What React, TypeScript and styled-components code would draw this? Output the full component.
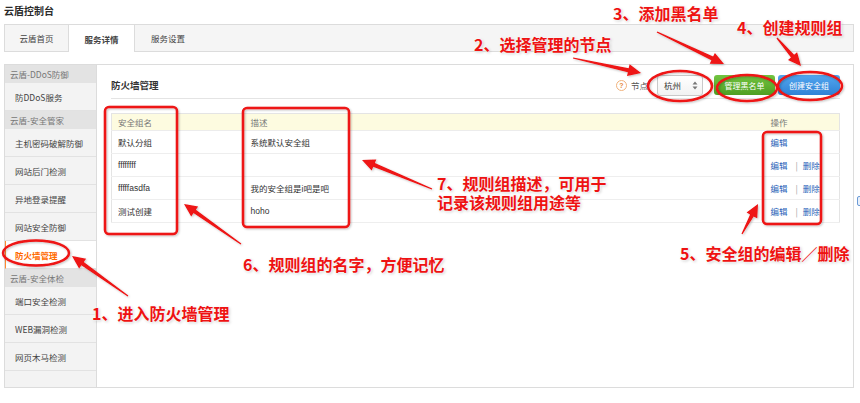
import React from "react";
import styled, { createGlobalStyle } from "styled-components";

const CJK = `"Noto Sans CJK SC", "Noto Sans", sans-serif`;
const LATIN = `"Liberation Sans", "Noto Sans CJK SC", sans-serif`;
const RED = "#ee1212";

const GlobalStyle = createGlobalStyle`
  html, body {
    margin: 0;
    padding: 0;
    background: #ffffff;
  }
  * {
    box-sizing: border-box;
  }
`;

const Page = styled.div`
  position: relative;
  width: 860px;
  height: 403px;
  overflow: hidden;
  background: #ffffff;
  font-family: ${CJK};
  color: #333;
`;

const Shell = styled.div`
  padding: 0 6px 0 4px;
`;

const AppTitle = styled.div`
  height: 24px;
  line-height: 21px;
  font-size: 10px;
  font-weight: bold;
  color: #2b2b2b;
`;

const TabBar = styled.div`
  display: flex;
  height: 28px;
  border: 1px solid #dcdcdc;
  background: #f5f5f5;
`;

const Tab = styled.div<{ width: number; active?: boolean; last?: boolean }>`
  width: ${p => p.width}px;
  display: flex;
  align-items: center;
  justify-content: center;
  font-size: 8.5px;
  color: #444;
  font-weight: ${p => (p.active ? "bold" : "normal")};
  background: ${p => (p.active ? "#ffffff" : "transparent")};
  border-right: ${p => (p.last ? "none" : "1px solid #dcdcdc")};
  margin-bottom: ${p => (p.active ? "-1px" : "0")};
  position: relative;
`;

const Panel = styled.div`
  margin-top: 12px;
  display: flex;
  height: 324px;
  border: 1px solid #dcdcdc;
`;

const Sidebar = styled.div`
  width: 92px;
  display: flex;
  flex-direction: column;
  overflow: hidden;
  background: #f3f3f3;
  border-right: 1px solid #dcdcdc;
`;

const SideHeader = styled.div`
  flex-shrink: 0;
  height: 18px;
  display: flex;
  align-items: center;
  padding-left: 5px;
  background: #e3e3e3;
  font-size: 8.5px;
  color: #777;
`;

const SideItem = styled.div<{ active?: boolean }>`
  flex-shrink: 0;
  height: 28px;
  display: flex;
  align-items: center;
  padding-left: ${p => (p.active ? "9px" : "10px")};
  font-size: 8.5px;
  color: ${p => (p.active ? "#ff6a00" : "#444")};
  font-weight: ${p => (p.active ? "bold" : "normal")};
  background: ${p => (p.active ? "#ffffff" : "transparent")};
  border-bottom: 1px solid #e2e2e2;
  border-left: ${p => (p.active ? "1px solid #ff8a30" : "none")};
  margin-right: ${p => (p.active ? "-1px" : "0")};
`;

const Content = styled.div`
  flex: 1;
  padding: 9px 13px 0 14px;
`;

const TitleRow = styled.div`
  height: 25px;
  display: flex;
  align-items: flex-start;
  justify-content: space-between;
  border-bottom: 1px solid #e4e4e4;
`;

const SectionTitle = styled.div`
  font-size: 9.5px;
  font-weight: bold;
  color: #333;
  line-height: 22px;
`;

const Controls = styled.div`
  display: flex;
  align-items: center;
  height: 22px;
`;

const HelpIcon = styled.span`
  width: 11px;
  height: 11px;
  border-radius: 50%;
  border: 1px solid #f1b27c;
  color: #e7873a;
  font-family: ${LATIN};
  font-size: 7px;
  font-weight: bold;
  display: flex;
  align-items: center;
  justify-content: center;
`;

const NodeLabel = styled.span`
  margin: 0 9px 0 4px;
  font-size: 8.5px;
  color: #555;
`;

const Select = styled.div`
  width: 46px;
  height: 21px;
  display: flex;
  align-items: center;
  justify-content: space-between;
  padding: 0 4px 0 6px;
  border: 1px solid #c9c9c9;
  border-radius: 3px;
  background: linear-gradient(#ffffff, #f2f2f2);
  font-size: 8.5px;
  color: #333;
`;

const Button = styled.div<{ tone: "green" | "blue"; width: number }>`
  width: ${p => p.width}px;
  height: 20px;
  display: flex;
  align-items: center;
  justify-content: center;
  border-radius: 3px;
  font-size: 8px;
  color: #ffffff;
  background: ${p =>
    p.tone === "green"
      ? "linear-gradient(#72c441, #4f9f22)"
      : "linear-gradient(#52a6ef, #2f82d6)"};
  margin-left: ${p => (p.tone === "green" ? "11px" : "3px")};
`;

const Table = styled.table`
  margin-top: 14px;
  width: 100%;
  border-collapse: collapse;
  border: 1px solid #e4e4e4;
  font-size: 8.5px;
`;

const HeadCell = styled.th<{ width?: number }>`
  ${p => (p.width ? `width: ${p.width}px;` : "")}
  height: 17px;
  padding: 0 0 0 6px;
  text-align: left;
  font-weight: normal;
  color: #777;
  background: #fdfbe0;
  border-bottom: 1px solid #ececec;
`;

const Cell = styled.td<{ latin?: boolean }>`
  height: 23px;
  padding: 0 0 0 6px;
  color: #333;
  font-family: ${p => (p.latin ? LATIN : CJK)};
  border-bottom: 1px solid #eeeeee;
`;

const OpLink = styled.span`
  color: #2a5fb8;
`;

const OpSep = styled.span`
  color: #999;
  margin: 0 5px 0 8px;
`;

const EdgeTab = styled.div`
  position: absolute;
  right: -4px;
  top: 196px;
  width: 7px;
  height: 10px;
  border: 1px solid #6c9bd6;
  border-radius: 2px;
  background: #e8f0fb;
`;

const Overlay = styled.svg`
  position: absolute;
  left: 0;
  top: 0;
  pointer-events: none;
`;

const Note = styled.div<{ x: number; y: number }>`
  position: absolute;
  left: ${p => p.x}px;
  top: ${p => p.y}px;
  font-family: ${CJK};
  font-size: 16px;
  font-weight: bold;
  line-height: 19px;
  color: ${RED};
  white-space: nowrap;
  text-shadow: 0 0 2px #fff, 0 0 3px #fff, 1px 1px 3px rgba(0, 0, 0, 0.25);
`;

const SIDEBAR = [
  { header: "云盾-DDoS防御", items: ["防DDoS服务"] },
  {
    header: "云盾-安全管家",
    items: ["主机密码破解防御", "网站后门检测", "异地登录提醒", "网站安全防御", "防火墙管理"]
  },
  { header: "云盾-安全体检", items: ["端口安全检测", "WEB漏洞检测", "网页木马检测", ""] }
];

const GROUPS = [
  { name: "默认分组", desc: "系统默认安全组", remove: false },
  { name: "ffffffff", desc: "", remove: true },
  { name: "fffffasdfa", desc: "我的安全组是i吧是吧", remove: true },
  { name: "测试创建", desc: "hoho", remove: true }
];

// tail -> head, tapered shaft with a triangular head
const arrowPoints = (x1: number, y1: number, x2: number, y2: number) => {
  const len = Math.hypot(x2 - x1, y2 - y1);
  const dx = (x2 - x1) / len;
  const dy = (y2 - y1) / len;
  const nx = -dy;
  const ny = dx;
  const headLen = 13;
  const cx = x2 - dx * headLen;
  const cy = y2 - dy * headLen;
  const pts = [
    [x1 + nx * 0.6, y1 + ny * 0.6],
    [cx + nx * 2, cy + ny * 2],
    [cx + nx * 6, cy + ny * 6],
    [x2, y2],
    [cx - nx * 6, cy - ny * 6],
    [cx - nx * 2, cy - ny * 2],
    [x1 - nx * 0.6, y1 - ny * 0.6]
  ];
  return pts.map(p => `${p[0].toFixed(1)},${p[1].toFixed(1)}`).join(" ");
};

const ARROWS = [
  [128, 296, 72, 256],
  [573, 58, 641, 73],
  [657, 32, 724, 64],
  [777, 38, 801, 66],
  [742, 234, 758, 204],
  [241, 244, 184, 204],
  [432, 189, 362, 160]
];

const StepperIcon = () => (
  <svg width="6" height="9" viewBox="0 0 6 9">
    <path d="M3 0.5 L5.5 3.5 H0.5 Z M3 8.5 L5.5 5.5 H0.5 Z" fill="#777" />
  </svg>
);

const Annotations = () => (
  <>
    <Overlay width="860" height="403" viewBox="0 0 860 403">
      <defs>
        <filter id="soft" x="-20%" y="-20%" width="140%" height="140%">
          <feDropShadow dx="1" dy="1" stdDeviation="1" floodColor="#000" floodOpacity="0.25" />
        </filter>
      </defs>
      <g fill="none" stroke={RED} strokeWidth="2.5" filter="url(#soft)">
        <ellipse cx="36" cy="253" rx="33" ry="12.5" />
        <rect x="105" y="107" width="72" height="127" rx="4" />
        <rect x="243" y="108" width="106" height="119" rx="4" />
        <rect x="763" y="132" width="58" height="92" rx="4" />
        <ellipse cx="680" cy="86" rx="32" ry="15" />
        <ellipse cx="747" cy="88" rx="30" ry="13" />
        <ellipse cx="810" cy="86" rx="32" ry="14" />
      </g>
      <g fill={RED} filter="url(#soft)">
        {ARROWS.map((a, i) => (
          <polygon key={i} points={arrowPoints(a[0], a[1], a[2], a[3])} />
        ))}
      </g>
    </Overlay>
    <Note x={92} y={304}>1、进入防火墙管理</Note>
    <Note x={474} y={35}>2、选择管理的节点</Note>
    <Note x={613} y={4}>3、添加黑名单</Note>
    <Note x={737} y={18}>4、创建规则组</Note>
    <Note x={680} y={244}>5、安全组的编辑／删除</Note>
    <Note x={243} y={255}>6、规则组的名字，方便记忆</Note>
    <Note x={437} y={174}>
      7、规则组描述，可用于
      <br />
      记录该规则组用途等
    </Note>
  </>
);

const App = () => (
  <Page>
    <GlobalStyle />
    <Shell>
      <AppTitle>云盾控制台</AppTitle>
      <TabBar>
        <Tab width={64}>云盾首页</Tab>
        <Tab width={66} active>
          服务详情
        </Tab>
        <Tab width={66} last>
          服务设置
        </Tab>
      </TabBar>
      <Panel>
        <Sidebar>
          {SIDEBAR.map(group => (
            <React.Fragment key={group.header}>
              <SideHeader>{group.header}</SideHeader>
              {group.items.map((item, i) => (
                <SideItem key={group.header + i} active={item === "防火墙管理"}>
                  {item}
                </SideItem>
              ))}
            </React.Fragment>
          ))}
        </Sidebar>
        <Content>
          <TitleRow>
            <SectionTitle>防火墙管理</SectionTitle>
            <Controls>
              <HelpIcon>?</HelpIcon>
              <NodeLabel>节点</NodeLabel>
              <Select>
                杭州
                <StepperIcon />
              </Select>
              <Button tone="green" width={61}>
                管理黑名单
              </Button>
              <Button tone="blue" width={62}>
                创建安全组
              </Button>
            </Controls>
          </TitleRow>
          <Table>
            <thead>
              <tr>
                <HeadCell width={133}>安全组名</HeadCell>
                <HeadCell>描述</HeadCell>
                <HeadCell width={75}>操作</HeadCell>
              </tr>
            </thead>
            <tbody>
              {GROUPS.map(g => (
                <tr key={g.name}>
                  <Cell latin>{g.name}</Cell>
                  <Cell latin>{g.desc}</Cell>
                  <Cell>
                    <OpLink>编辑</OpLink>
                    {g.remove && (
                      <>
                        <OpSep>|</OpSep>
                        <OpLink>删除</OpLink>
                      </>
                    )}
                  </Cell>
                </tr>
              ))}
            </tbody>
          </Table>
        </Content>
      </Panel>
    </Shell>
    <EdgeTab />
    <Annotations />
  </Page>
);

export default App;
